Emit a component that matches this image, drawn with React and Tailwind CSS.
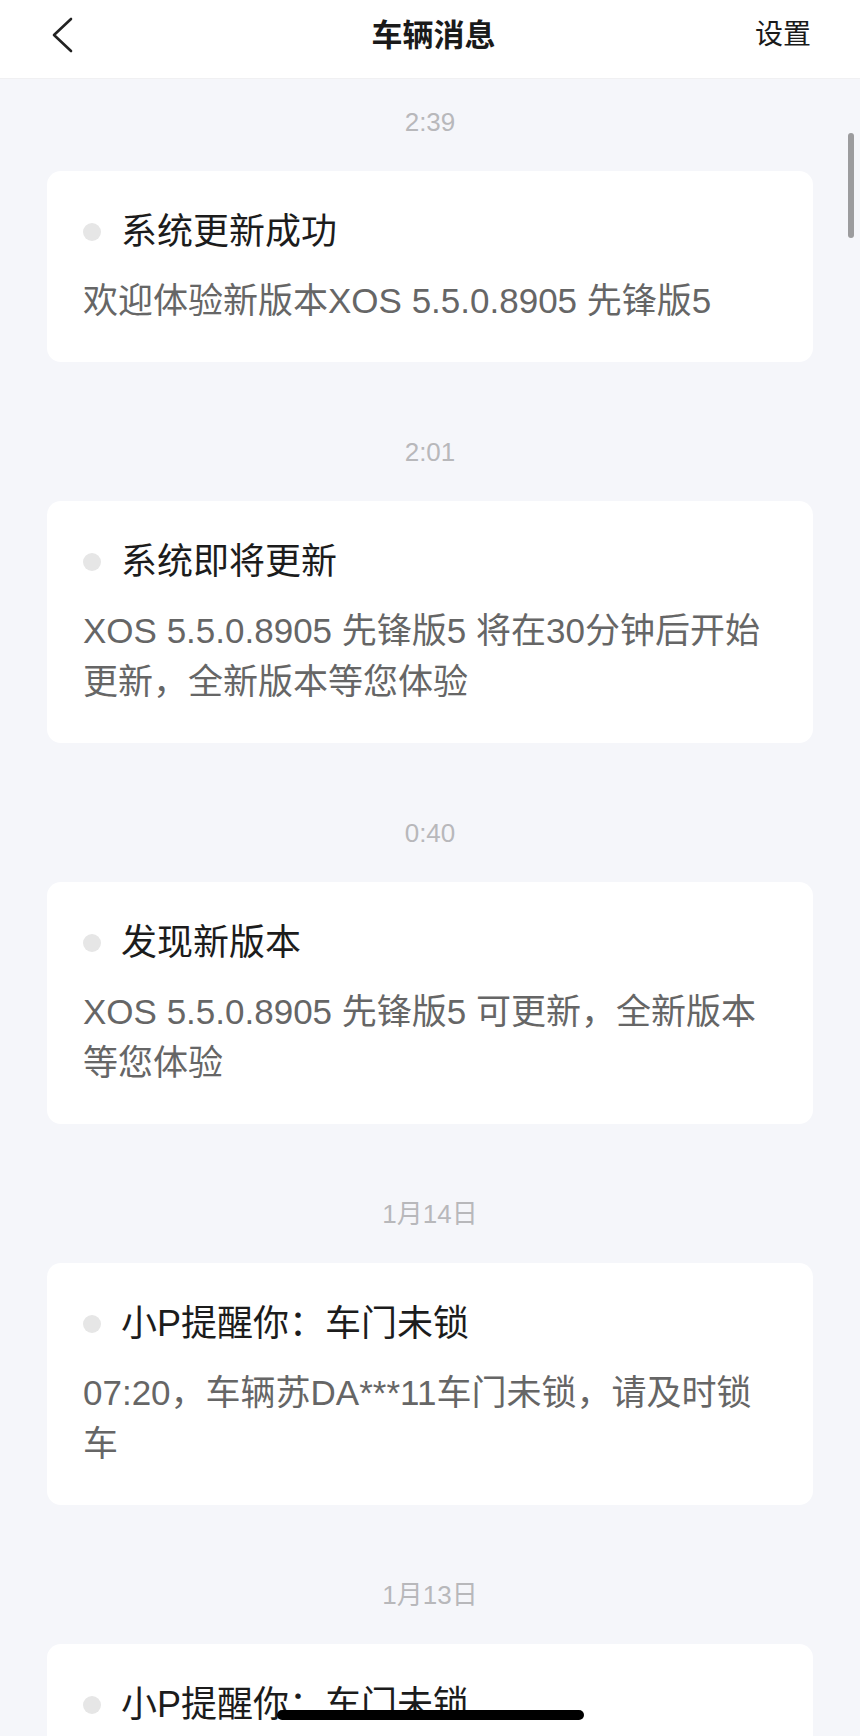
import React from "react";

const messages = [
  {
    time: "2:39",
    title: "系统更新成功",
    lines: ["欢迎体验新版本XOS 5.5.0.8905 先锋版5"],
  },
  {
    time: "2:01",
    title: "系统即将更新",
    lines: ["XOS 5.5.0.8905 先锋版5 将在30分钟后开始", "更新，全新版本等您体验"],
  },
  {
    time: "0:40",
    title: "发现新版本",
    lines: ["XOS 5.5.0.8905 先锋版5 可更新，全新版本", "等您体验"],
  },
  {
    time: "1月14日",
    title: "小P提醒你：车门未锁",
    lines: ["07:20，车辆苏DA***11车门未锁，请及时锁", "车"],
  },
  {
    time: "1月13日",
    title: "小P提醒你：车门未锁",
    lines: ["07:20，车辆苏DA***11车门未锁，请及时锁", "车"],
  },
];

const MessageCard = ({ title, lines }) => (
  <div className="rounded-[14px] bg-white px-[36px] py-[36px]">
    <div className="flex items-center h-[50px]">
      <span className="w-[18px] h-[18px] rounded-full bg-[#e6e6e6] shrink-0" />
      <span className="ml-[20px] text-[36px] leading-[50px] text-[#1c1c1c] whitespace-nowrap">
        {title}
      </span>
    </div>
    <div className="mt-[18px] text-[35px] leading-[51px] text-[#666666]">
      {lines.map((line, i) => (
        <div key={i} className="whitespace-nowrap">
          {line}
        </div>
      ))}
    </div>
  </div>
);

export default function App() {
  return (
    <div
      className="relative w-[860px] h-[1736px] overflow-hidden bg-[#f5f6fa]"
      style={{ fontFamily: '"Liberation Sans", "Noto Sans CJK SC", sans-serif' }}
    >
      <header className="h-[79px] bg-white flex items-center justify-between pl-[50px] pr-[49px] pb-[8px] border-b border-[#f0f0f2]">
        <svg width="24" height="36" viewBox="0 0 24 36" fill="none" className="shrink-0">
          <path
            d="M21 2 L4 18 L21 34"
            stroke="#222"
            strokeWidth="2.6"
            strokeLinecap="round"
            strokeLinejoin="round"
          />
        </svg>
        <h1 className="text-[31px] font-semibold text-[#1a1a1a] leading-none ml-[38px]">
          车辆消息
        </h1>
        <button className="text-[28px] text-[#1a1a1a] leading-none">设置</button>
      </header>

      <main className="flex flex-col px-[47px] pt-[23px]">
        {messages.map((m, i) => (
          <div key={i} className={i === 0 ? "" : "mt-[70px]"}>
            <div className="h-[40px] flex items-center justify-center text-[26px] text-[#b8b8bb]">
              {m.time}
            </div>
            <div className="mt-[29px]">
              <MessageCard title={m.title} lines={m.lines} />
            </div>
          </div>
        ))}
      </main>

      {/* scroll indicator */}
      <div className="absolute right-[6px] top-[133px] w-[6px] h-[105px] rounded-full bg-[#9c9c9e]" />

      {/* home indicator */}
      <div className="absolute left-[277px] top-[1710px] w-[307px] h-[10px] rounded-full bg-black" />
    </div>
  );
}
